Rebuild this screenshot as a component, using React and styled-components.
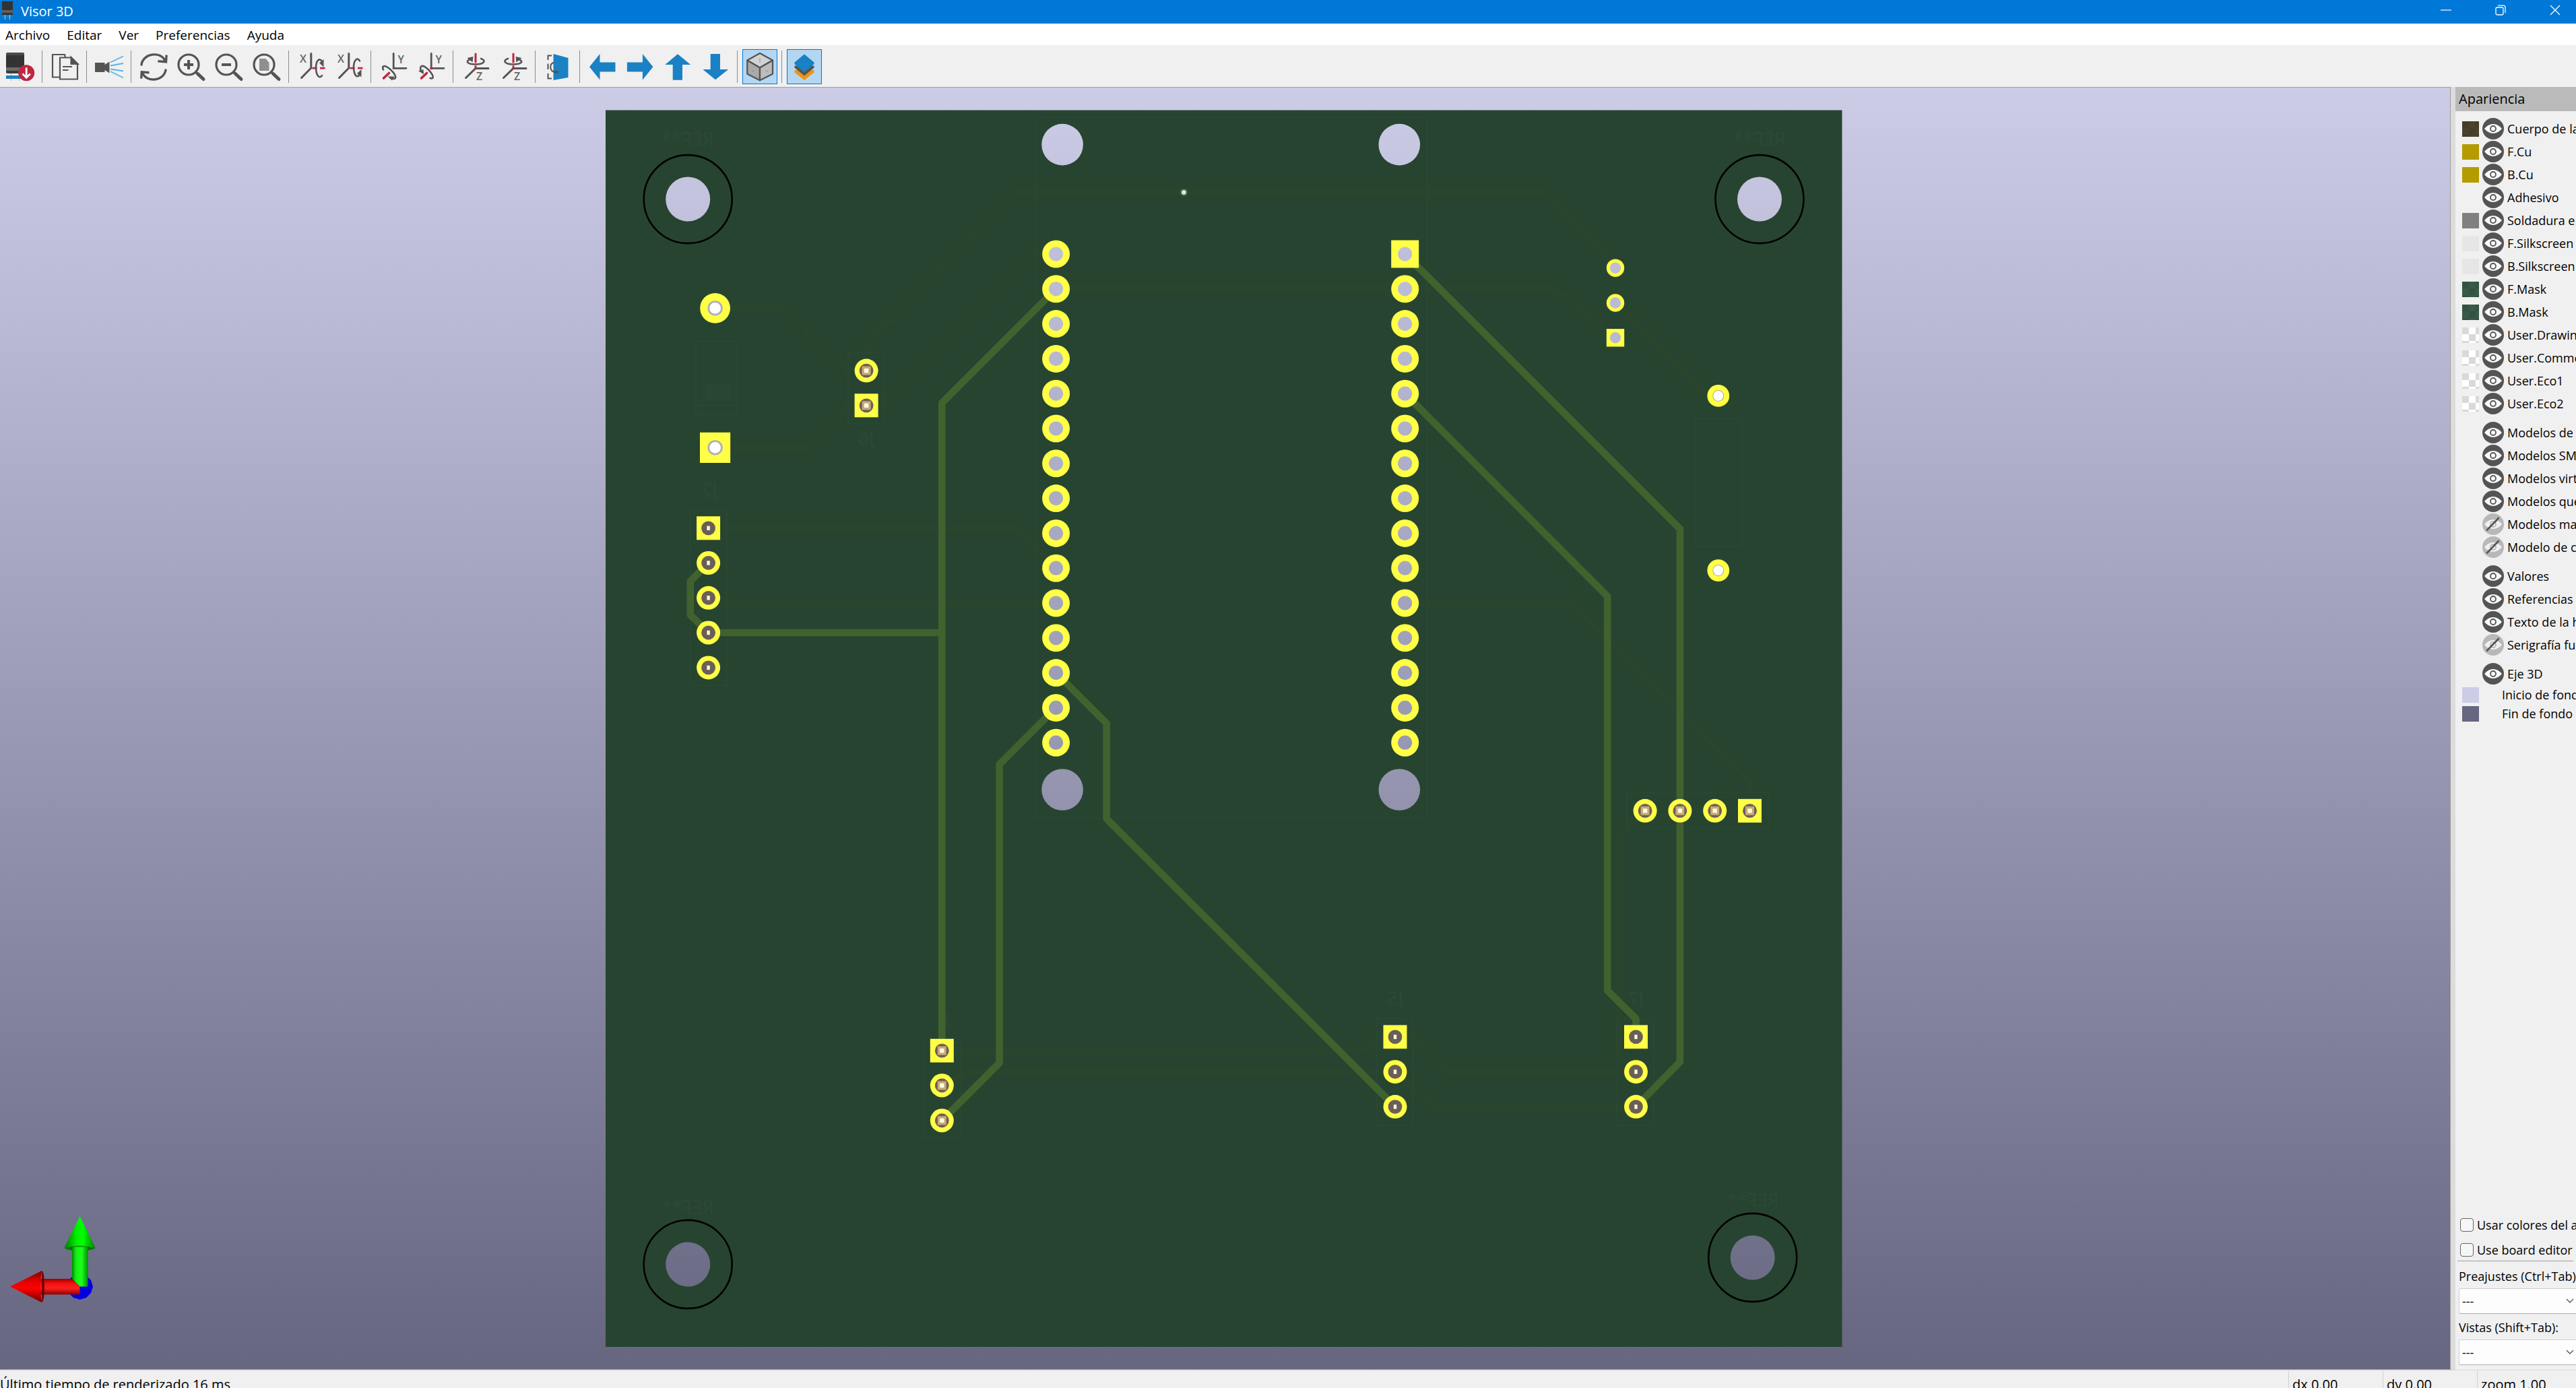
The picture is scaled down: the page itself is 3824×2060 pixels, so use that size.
import React from "react";
import styled, { createGlobalStyle } from "styled-components";

const Global = createGlobalStyle`
  * { box-sizing: border-box; }
  body { margin: 0; overflow: hidden; }
  button, select, input { font: inherit; color: inherit; }
`;

const Window = styled.div`
  display: flex;
  flex-direction: column;
  height: 100vh;
  overflow: hidden;
  background: #f0f0f0;
  color: #000;
  font-family: "Open Sans", "Noto Sans", sans-serif;
  font-size: 18px;
`;

/* Title bar */
const TitleBar = styled.header`
  display: flex;
  align-items: flex-start;
  height: 35px;
  flex: none;
  padding-left: 3px;
  overflow: hidden;
  background: #0078d7;
  color: #fff;
`;
const AppIcon = styled.svg`
  width: 17px;
  height: 30px;
  margin-right: 11px;
`;
const Title = styled.h1`
  flex: 1;
  margin: 0;
  font-size: 20px;
  font-weight: 400;
  line-height: 34px;
`;
const WindowControls = styled.div`
  display: flex;
  flex: none;
  margin-right: -9px;
`;
const WindowButton = styled.button`
  display: flex;
  align-items: center;
  justify-content: center;
  width: 81px;
  height: 29px;
  padding: 0;
  border: 0;
  background: transparent;
`;

/* Menu bar */
const MenuBar = styled.nav`
  display: flex;
  gap: 25px;
  height: 32px;
  flex: none;
  padding-left: 8px;
  background: #fff;
`;
const MenuItem = styled.button`
  padding: 0;
  border: 0;
  background: transparent;
  font-size: 19px;
  line-height: 34px;
`;

/* Toolbar */
const Toolbar = styled.div`
  display: flex;
  align-items: center;
  height: 62px;
  flex: none;
  padding: 2px 0 0 2px;
`;
const ToolButton = styled.button`
  display: flex;
  align-items: center;
  justify-content: center;
  width: 52px;
  height: 52px;
  margin: 0 2px;
  padding: 0;
  border: 1px solid ${(p) => (p.$on ? "#0078d7" : "transparent")};
  background: ${(p) => (p.$on ? "#b3d7f3" : "transparent")};
`;
const ToolSeparator = styled.span`
  width: 1px;
  height: 48px;
  margin: 0 5px 0 4px;
  background: #8c8c8c;
`;
const ToolSvg = styled.svg`
  width: 42px;
  height: 42px;
  overflow: visible;
`;
const AxisLetter = styled.text`
  font-family: "Open Sans", sans-serif;
  font-size: 16px;
  font-weight: 600;
  fill: #666;
`;

/* Main area */
const Main = styled.div`
  display: flex;
  flex: 1;
  min-height: 0;
`;
const Viewport = styled.main`
  position: relative;
  flex: 1;
  min-width: 0;
  border: solid #a0a0a0;
  border-width: 1px 1px 1px 0;
  background: linear-gradient(#cccce6, #666680);
`;
const BoardSvg = styled.svg`
  display: block;
  width: 100%;
  height: 100%;
`;
const AxesSvg = styled.svg`
  position: absolute;
  left: 12px;
  bottom: 92px;
  width: 140px;
  height: 140px;
`;
const SilkText = styled.text`
  font-family: "Open Sans", sans-serif;
  font-size: 28px;
  text-anchor: middle;
  fill: #2c4937;
`;
const Sash = styled.div`
  width: 7px;
  flex: none;
  background: #dcdcdc;
`;

/* Appearance panel */
const Panel = styled.aside`
  display: flex;
  flex-direction: column;
  width: 179px;
  flex: none;
  overflow: hidden;
  white-space: nowrap;
`;
const PanelTitle = styled.h2`
  height: 36px;
  flex: none;
  margin: 0;
  padding-left: 5px;
  background: #bababa;
  font-size: 20px;
  font-weight: 400;
  line-height: 36px;
`;
const Groups = styled.div`
  display: flex;
  flex-direction: column;
  flex: 1;
  gap: 9px;
  padding: 9px 0 0 10px;
`;
const Group = styled.ul`
  margin: 0;
  padding: 0;
  list-style: none;
`;
const LayerRow = styled.li`
  display: flex;
  align-items: center;
  height: ${(p) => (p.$compact ? 28 : 34)}px;
`;
const Swatch = styled.span`
  width: 25px;
  height: 23px;
  flex: none;
  margin-right: ${(p) => (p.$wide ? 34 : 5)}px;
  background: ${(p) => p.$fill};
`;
const EyeButton = styled.button`
  width: 32px;
  height: 32px;
  flex: none;
  margin-right: 5px;
  padding: 0;
  border: 0;
  background: transparent;
`;
const EyeSvg = styled.svg`
  display: block;
  width: 32px;
  height: 32px;
`;
const Options = styled.div`
  display: flex;
  flex-direction: column;
  padding: 0 0 7px 7px;
`;
const CheckLabel = styled.label`
  display: flex;
  align-items: center;
  gap: 5px;
  height: 37px;
`;
const CheckBox = styled.input`
  appearance: none;
  width: 20px;
  height: 20px;
  flex: none;
  margin: 0;
  border: 1px solid #666;
  border-radius: 4px;
  background: #f6f6f6;
`;
const Rule = styled.hr`
  width: 100%;
  height: 1px;
  margin: -2px 0 2px -4px;
  border: 0;
  background: #a0a0a0;
`;
const FieldLabel = styled.label`
  height: 38px;
  margin-left: -2px;
  line-height: 40px;
`;
const SelectBox = styled.div`
  display: flex;
  align-items: center;
  margin: 0 -8px 0 -2px;
`;
const Select = styled.select`
  appearance: none;
  width: 100%;
  height: 38px;
  padding: 0 4px;
  border: 1px solid #d0d0d0;
  border-bottom-color: #b0b0b0;
  border-radius: 3px;
  background: #fdfdfd;
`;
const Chevron = styled.svg`
  width: 12px;
  height: 8px;
  flex: none;
  margin-left: -23px;
  margin-right: 11px;
  pointer-events: none;
`;

/* Status bar */
const StatusBar = styled.footer`
  display: flex;
  height: 27px;
  flex: none;
  padding-top: 1px;
  overflow: hidden;
  border-top: 1px solid #d8d8d8;
  font-size: 20px;
  line-height: 40px;
  white-space: nowrap;
`;
const StatusMessage = styled.span`
  flex: 1;
`;
const StatusField = styled.span`
  width: ${(p) => (p.$last ? 147 : 140)}px;
  flex: none;
  padding-left: 5px;
  border-left: 1px solid #d0d0d0;
`;

const INK = "#545454";
const RED = "#bf2641";
const BLUE = "#1a81c4";

/* Toolbar drawings */
const line = { fill: "none", stroke: INK, strokeWidth: 3, strokeLinecap: "round" };

const Lens = ({ children }) => (
  <ToolSvg viewBox="0 0 42 42">
    <circle cx="17" cy="18" r="15" fill="none" stroke={INK} strokeWidth="3.2" />
    <path d="M27.5 29l3 3" stroke={INK} strokeWidth="3.5" />
    <path d="M30.5 31.5L39 39.5" {...line} strokeWidth="5" />
    {children}
  </ToolSvg>
);

const ICONS = {
  export: (
    <ToolSvg viewBox="0 0 42 42">
      <path d="M2 0h23q2 0 2 3v19H0V3q0-3 2-3z" fill="#333" />
      <path d="M2 0h23q2 1 2 4H0q0-3 2-4z" fill="#4a4a4a" />
      <path d="M0 22h27v5H0z" fill="#6b6b6b" />
      <path d="M0 27h27v2q0 2-2 2H2q-2 0-2-2z" fill="#3b3b3b" />
      <path d="M7.500 31v11M19.500 31v11" stroke="#a9b4bb" strokeWidth="1" />
      <path d="M0 34h22v5H0z" fill={BLUE} />
      <circle cx="30.200" cy="30.300" r="12" fill={RED} />
      <path d="M30.200 22.500v14.500M24.500 31.500l5.700 5.700 5.700-5.700" fill="none" stroke="#fff" strokeWidth="2.800" />
    </ToolSvg>
  ),
  copy: (
    <ToolSvg viewBox="0 0 42 42" fill="none" stroke={INK} strokeWidth="2.200">
      <path d="M22 7.500L21 3H3v33.500h10" />
      <path d="M14 7.500h16.500L40 17v22.500H14z" fill="#f0f0f0" />
      <path d="M30.500 7v10h10z" fill={INK} />
      <path d="M18 21h14M18 26h8.500" />
    </ToolSvg>
  ),
  camera: (
    <ToolSvg viewBox="0 0 42 42">
      <path d="M0 15h14.500v3l7-4.500v17l-7-4.500v3H0z" fill={INK} />
      <path d="M23 14.500L42 5.500M23 19.500l19-3.500M23 24.500l19 3M23 28l19 9.500" stroke="#5ab4e5" strokeWidth="1.800" />
    </ToolSvg>
  ),
  refresh: (
    <ToolSvg viewBox="0 0 42 42" {...line} strokeWidth="3.400" strokeLinejoin="miter">
      <path d="M3 18C5 1.500 31-3 38 12" />
      <path d="M29 13l10.500.8.500-8.500" strokeLinecap="square" />
      <path d="M39 26C36 42.500 11 45 4.500 30.500" />
      <path d="M2.800 37l.5-8.200 9.500.8" strokeLinecap="square" />
    </ToolSvg>
  ),
  zoomIn: (
    <Lens>
      <path d="M10 18h14M17 11v14" stroke={INK} strokeWidth="4" />
    </Lens>
  ),
  zoomOut: (
    <Lens>
      <path d="M10 18h14" stroke={INK} strokeWidth="4" />
    </Lens>
  ),
  zoomFit: (
    <Lens>
      <path d="M10 9h9.500l5 6v12H10z" fill="#8f8f8f" />
    </Lens>
  ),
  rotXcw: (
    <ToolSvg viewBox="0 0 42 42">
      <AxisLetter x="4" y="15">X</AxisLetter>
      <path d="M20.800 1.500V23L6.500 37.500" {...line} />
      <path d="M22.500 23.200h7M34 23.200h7.500" stroke={RED} strokeWidth="2.800" />
      <path d="M37 13C33 7 28 12 28 22.500S33 40 37 34" {...line} strokeWidth="2.600" />
      <path d="M33 15.500L39.500 10v11.500z" fill={INK} />
    </ToolSvg>
  ),
  rotXccw: (
    <ToolSvg viewBox="0 0 42 42">
      <AxisLetter x="4" y="15">X</AxisLetter>
      <path d="M20.800 1.500V23L6.500 37.500" {...line} />
      <path d="M22.500 23.200h7M34 23.200h7.500" stroke={RED} strokeWidth="2.800" />
      <path d="M37 12.500C34 6 28 11 28 21.500S32 38 36 34" {...line} strokeWidth="2.600" />
      <path d="M33 31L39.500 25v11.500z" fill={INK} />
    </ToolSvg>
  ),
  rotYcw: (
    <ToolSvg viewBox="0 0 42 42">
      <AxisLetter x="27.500" y="16">Y</AxisLetter>
      <path d="M21.200 1.500V23.300H40" {...line} strokeWidth="2.800" />
      <path d="M6.500 38L14.500 30.500" {...line} stroke={RED} strokeWidth="3.600" />
      <path d="M6 25.500C3.500 20 7 18.500 12.500 22S25 33 24 37.500C23 40 19.500 39 16.500 37" {...line} strokeWidth="2.600" />
      <path d="M12.500 35.500L22.500 35.500 19 41.500z" fill={INK} />
    </ToolSvg>
  ),
  rotYccw: (
    <ToolSvg viewBox="0 0 42 42">
      <AxisLetter x="27.500" y="16">Y</AxisLetter>
      <path d="M21.200 1.500V23.300H40" {...line} strokeWidth="2.800" />
      <circle cx="21.200" cy="23.300" r="2" fill={RED} />
      <path d="M6.500 38L14.500 30.500" {...line} stroke={RED} strokeWidth="3.600" />
      <path d="M5.500 27C4 19 8 18.500 13 22S25 34 23.500 37.500C22.500 39 21 38.500 19.500 38" {...line} strokeWidth="2.600" />
      <path d="M2 27.500L9.500 25 10 32z" fill={INK} />
    </ToolSvg>
  ),
  rotZcw: (
    <ToolSvg viewBox="0 0 42 42">
      <AxisLetter x="22" y="41">Z</AxisLetter>
      <path d="M40 23.500H21L6.500 37.500" {...line} />
      <path d="M21 2v12M21 20.500v3" stroke={RED} strokeWidth="3" strokeLinecap="round" />
      <path d="M13 10C5 13 9 17.500 21 17.500S38 12 29 9" {...line} strokeWidth="2.600" />
      <path d="M8.500 8l9-2-1 8.500z" fill={INK} />
    </ToolSvg>
  ),
  rotZccw: (
    <ToolSvg viewBox="0 0 42 42">
      <AxisLetter x="22" y="41">Z</AxisLetter>
      <path d="M40 23.500H21L6.500 37.500" {...line} />
      <path d="M21 2v12M21 20.500v3" stroke={RED} strokeWidth="3" strokeLinecap="round" />
      <path d="M13 9C4 12 9 17.500 21 17.500S37 13 29 10" {...line} strokeWidth="2.600" />
      <path d="M33.500 8l-9-2 1 8.500z" fill={INK} />
    </ToolSvg>
  ),
  flip: (
    <ToolSvg viewBox="0 0 42 42">
      <path d="M14.500 2l22 6v29l-22 4z" fill={BLUE} />
      <path d="M12 4.500H6.500V11M6.500 16.500V25M6.500 31v7.500H12" fill="none" stroke={INK} strokeWidth="2" />
      <path d="M14.500 15C8.500 17 8.500 28 17 29" {...line} strokeWidth="2" />
      <path d="M16 26l8.500 2.800L16 31.500z" fill={INK} />
    </ToolSvg>
  ),
  left: (
    <ToolSvg viewBox="0 0 42 42">
      <path d="M2 21.300L17.500 2v12.600h23v14h-23v11.800z" fill={BLUE} />
    </ToolSvg>
  ),
  right: (
    <ToolSvg viewBox="0 0 42 42">
      <path d="M40.400 21.300L24.900 2v12.600H1.900v14h23v11.800z" fill={BLUE} />
    </ToolSvg>
  ),
  up: (
    <ToolSvg viewBox="0 0 42 42">
      <path d="M21 2.300L40.200 18H28v22.700H13.700V18H2.300z" fill={BLUE} />
    </ToolSvg>
  ),
  down: (
    <ToolSvg viewBox="0 0 42 42">
      <path d="M21 40.300L40.200 25H28V2H13.700v23H2.300z" fill={BLUE} />
    </ToolSvg>
  ),
  cube: (
    <ToolSvg viewBox="0 0 42 42" stroke={INK} strokeWidth="2.200" strokeLinejoin="round">
      <path d="M21 1l19 10.500L21 22.500 2.300 11.500z" fill="#d2d2d2" />
      <path d="M2.300 11.500L21 22.500v18.800L2.300 31.800z" fill="#a9a9a9" />
      <path d="M40 11.500L21 22.500v18.800l19-9.500z" fill="#bcbcbc" />
      <path d="M21 8.500v6M8.500 28.500l4-2M33.500 28.500l-4-2" stroke="#8a8a8a" strokeWidth="1" />
    </ToolSvg>
  ),
  layers: (
    <ToolSvg viewBox="0 0 42 42">
      <path d="M6.500 26.500l4-1L21 34l10.500-8.500 4 1v3L21 41 6.500 29.500z" fill="#ee9412" />
      <path d="M6.500 19.500h29v3L21 34.500 6.500 22.500z" fill={INK} />
      <path d="M21 2.500l14.500 12v2.500L21 29.300 6.500 17v-2.500z" fill={BLUE} />
    </ToolSvg>
  ),
};

const TOOLBAR = [
  [["export", "Exportar imagen"]],
  [["copy", "Copiar"]],
  [["camera", "Trazado de rayos"]],
  [["refresh", "Actualizar"], ["zoomIn", "Acercar"], ["zoomOut", "Alejar"], ["zoomFit", "Ajustar"]],
  [["rotXcw", "Rotar X horario"], ["rotXccw", "Rotar X antihorario"]],
  [["rotYcw", "Rotar Y horario"], ["rotYccw", "Rotar Y antihorario"]],
  [["rotZcw", "Rotar Z horario"], ["rotZccw", "Rotar Z antihorario"]],
  [["flip", "Voltear"]],
  [["left", "Izquierda"], ["right", "Derecha"], ["up", "Arriba"], ["down", "Abajo"]],
  [["cube", "Ortogonal", true]],
  [["layers", "Apariencia", true]],
];

/* Board data */
const HEADER_ROWS = Array.from({ length: 15 }, (_, i) => 377 + i * 51.8);

const TRACES = [
  "M1567.600 428.800L1398.300 598V1559",
  "M1051.600 939H1398.300",
  "M1051.600 835.500L1024.800 862.400V912.400L1051.600 939",
  "M1567.600 998.600L1642.600 1073.400V1215L2071 1642.600",
  "M1567.600 1050.300L1483.600 1134.600V1577.600L1398.300 1663",
  "M2085.700 377L2493.900 785V1576L2428.500 1642.600",
  "M2085.700 584.200L2386.200 885V1470L2428.500 1512V1539",
];

const BURIED = [
  "M1567 428.800H2307L2398 501",
  "M1061 457.400H1165L1258 550H1286",
  "M1061 664.400H1195L1258 602H1305L1530 377H1567",
  "M1286 550V512L1512 285H2297L2398 397",
  "M2398 449.500L2536 587H2550",
  "M1051 784H1510L1567 843",
  "M1051 887L1059 895H1567",
  "M2085 895H2333L2598 1160V1203",
  "M1398 1559H2023L2044 1539H2071",
  "M1398 1611L1440 1590H2071",
  "M2071 1539H2100L2152 1591H2428",
  "M2071 1591L2128 1643H2428",
  "M2442 1203L2403 1242V1566L2428 1591",
];

const SILK = [
  "M1033 506h60v110h-60zM1033 601h60",
  "M1259 523h54v106h-54z",
  "M1025 757h54v260h-54z",
  "M1371 1547h56v142h-56z",
  "M2044 1512h54v158h-54z",
  "M2401 1512h54v158h-54z",
  "M2415 1176h210v54h-210z",
  "M2516 622h70v189h-70z",
  "M1538 174h580v1040h-580z",
];

const SILK_LABELS = [
  ["REF**", 1021, 216], ["REF**", 2612, 216], ["REF**", 1021, 1802], ["REF**", 2602, 1791],
  ["J6", 1286, 660], ["J2", 1053, 737], ["J1", 1398, 1522], ["J5", 2071, 1492], ["J7", 2428, 1492],
];

const MOUNTS = [[1021.2, 295.6], [2612, 295.6], [1021.2, 1876.4], [2601.7, 1866.4]];
const DRILLS = [[1577.1, 214.6], [2077.3, 214.6], [1577.1, 1172], [2077.3, 1172]];

const PINS = [
  [1286.1, 550.1, "wide"], [1286.1, 601.8, "wide", true],
  [1051.6, 783.8, "thin", true], [1051.6, 835.5, "thin"], [1051.6, 887.3, "thin"], [1051.6, 939, "thin"], [1051.6, 990.9, "thin"],
  [2442.1, 1203.3, "wide"], [2493.9, 1203.3, "wide"], [2545.7, 1203.3, "wide"], [2597.5, 1203.3, "wide", true],
  [2071, 1538.9, "thin", true], [2071, 1590.7, "thin"], [2071, 1642.6, "thin"],
  [2428.5, 1538.9, "thin", true], [2428.5, 1590.7, "thin"], [2428.5, 1642.6, "thin"],
  [1398.3, 1559.3, "wide", true], [1398.3, 1611, "wide"], [1398.3, 1663, "wide"],
];

const Pad = ({ x, y, r, square, hole, fill = "url(#sky)" }) => (
  <>
    {square ? (
      <rect x={x - r} y={y - r} width={2 * r} height={2 * r} fill="#ffff46" />
    ) : (
      <circle cx={x} cy={y} r={r} fill="#ffff46" />
    )}
    <circle cx={x} cy={y} r={hole} fill={fill} />
  </>
);

const Pin = ({ x, y, kind, square }) => (
  <>
    <Pad x={x} y={y} r={17.5} square={square} hole={10.4} fill="#695f57" />
    {kind === "wide" && <rect x={x - 6.5} y={y - 6.5} width="13" height="13" fill="#c9a877" />}
    {kind === "wide" ? (
      <rect x={x - 3.2} y={y - 3.2} width="6.400" height="6.400" fill="#fffbe2" />
    ) : (
      <rect x={x - 2.2} y={y - 3.2} width="4.400" height="6.400" fill="#fffbe2" />
    )}
  </>
);

const Board = () => (
  <BoardSvg viewBox="0 130 3637 1902">
    <defs>
      <linearGradient id="sky" gradientUnits="userSpaceOnUse" x1="0" y1="130" x2="0" y2="2032">
        <stop offset="0" stopColor="#cccce6" />
        <stop offset="1" stopColor="#666680" />
      </linearGradient>
    </defs>
    <rect x="899" y="163.500" width="1835.500" height="1835.500" fill="#274430" />
    <g fill="none" stroke="#29452d" strokeWidth="11" strokeLinejoin="round">
      {BURIED.map((d) => <path key={d} d={d} />)}
    </g>
    <rect x="1048" y="571" width="37" height="22" fill="#294733" />
    <g fill="none" stroke="#294733" strokeWidth="2">
      {SILK.map((d) => <path key={d} d={d} />)}
    </g>
    {SILK_LABELS.map(([t, x, y]) => (
      <SilkText key={t + x + y} transform={`translate(${x} ${y}) scale(-1 1)`}>{t}</SilkText>
    ))}
    <g fill="none" stroke="#40622f" strokeWidth="10.600" strokeLinejoin="round">
      {TRACES.map((d) => <path key={d} d={d} />)}
    </g>
    {MOUNTS.map(([x, y]) => (
      <g key={x + "-" + y}>
        <circle cx={x} cy={y} r="65.500" fill="none" stroke="#000" strokeWidth="2.600" />
        <circle cx={x} cy={y} r="33" fill="url(#sky)" />
      </g>
    ))}
    {DRILLS.map(([x, y]) => <circle key={x + "-" + y} cx={x} cy={y} r="30.800" fill="url(#sky)" />)}
    {HEADER_ROWS.map((y) => <Pad key={y} x={1567.6} y={y} r={20.5} hole={10.6} />)}
    {HEADER_ROWS.map((y, i) => <Pad key={y} x={2085.7} y={y} r={20.5} hole={10.6} square={i === 0} />)}
    <Pad x={2398} y={397.7} r={13.2} hole={8.2} />
    <Pad x={2398} y={449.5} r={13.2} hole={8.2} />
    <Pad x={2398} y={501.3} r={13.2} hole={8.2} square />
    <Pad x={1061.6} y={457.4} r={22.4} hole={11.2} fill="#b0b0b8" />
    <Pad x={1061.6} y={664.4} r={22.6} hole={11.2} fill="#b0b0b8" square />
    <circle cx="1061.600" cy="457.400" r="8.400" fill="#fff" />
    <circle cx="1061.600" cy="664.400" r="8.400" fill="#fff" />
    <Pad x={2550.8} y={587.4} r={16.4} hole={8.4} fill="#9a9a8a" />
    <Pad x={2550.8} y={846.6} r={16.4} hole={8.4} fill="#9a9a8a" />
    <circle cx="2550.800" cy="587.400" r="7.600" fill="#fff" />
    <circle cx="2550.800" cy="846.600" r="7.600" fill="#fff" />
    {PINS.map(([x, y, kind, square]) => <Pin key={x + "-" + y} x={x} y={y} kind={kind} square={square} />)}
    <circle cx="1757.400" cy="285.500" r="6" fill="#40622f" />
    <circle cx="1757.400" cy="285.500" r="3.400" fill="#dfe3ea" />
  </BoardSvg>
);

const Axes = () => (
  <AxesSvg viewBox="12 1800 140 140">
    <defs>
      <linearGradient id="greenShaft">
        <stop offset="0" stopColor="#008a00" />
        <stop offset=".25" stopColor="#10f010" />
        <stop offset=".6" stopColor="#1cff1c" />
        <stop offset="1" stopColor="#009000" />
      </linearGradient>
      <linearGradient id="greenCone">
        <stop offset="0" stopColor="#007a00" />
        <stop offset=".4" stopColor="#00f000" />
        <stop offset=".6" stopColor="#00ff00" />
        <stop offset="1" stopColor="#008000" />
      </linearGradient>
      <linearGradient id="redShaft" x2="0" y2="1">
        <stop offset="0" stopColor="#a00000" />
        <stop offset=".3" stopColor="#f41010" />
        <stop offset=".6" stopColor="#ff2020" />
        <stop offset="1" stopColor="#900000" />
      </linearGradient>
      <linearGradient id="redCone" x2="0" y2="1">
        <stop offset="0" stopColor="#800000" />
        <stop offset=".35" stopColor="#e80000" />
        <stop offset=".55" stopColor="#ff0000" />
        <stop offset="1" stopColor="#700000" />
      </linearGradient>
    </defs>
    <polygon points="118.500,1890.500 128,1893 135,1900 138,1909.600 135,1919 128,1926 118.500,1928.800 109,1926 102,1919 100,1909.600 102,1900 109,1893" fill="#0000e0" />
    <path d="M107 1850h23.500v59.600h-12L107 1898z" fill="url(#greenShaft)" />
    <path d="M60 1898h47l11.500 11.600v11.600H60z" fill="url(#redShaft)" />
    <path d="M62 1886q4 2 4 23.500T62 1933z" fill="#7a0000" />
    <path d="M15 1909.500L62 1886q-4 23 0 47z" fill="url(#redCone)" />
    <path d="M95.500 1852q23-7 46 0q-4 4-23 4t-23-4z" fill="#007a00" />
    <path d="M107 1850.500h23.500v6H107z" fill="url(#greenShaft)" />
    <path d="M118.500 1805l23 47q-23-6-46 0z" fill="url(#greenCone)" />
  </AxesSvg>
);

const Eye = ({ off }) => (
  <EyeSvg viewBox="0 0 32 32">
    <circle cx="16" cy="16" r="16" fill={off ? "#b8b8b8" : INK} />
    <path d="M3 16Q9 9 16 9t13 7q-6 7-13 7T3 16z" fill={off ? "#f0f0f0" : "#fafafa"} />
    <circle cx="16" cy="16" r="4" fill="none" stroke={off ? "#b8b8b8" : INK} strokeWidth="1.800" />
    {off && <path d="M7 24.500L24 7" stroke={INK} strokeWidth="2.600" strokeLinecap="round" />}
  </EyeSvg>
);

const CHECKER = "repeating-conic-gradient(#fff 0 25%, #d9d9d9 0 50%) 0 0 / 20px 20px";
const BODY = "repeating-conic-gradient(#4a412f 0 25%, #453c2a 0 50%) 0 0 / 20px 20px";
const MASK = "repeating-conic-gradient(#385a49 0 25%, #335241 0 50%) 0 0 / 20px 20px";

const LAYER_GROUPS = [
  [
    { name: "Cuerpo de la", fill: BODY },
    { name: "F.Cu", fill: "#b39b00" },
    { name: "B.Cu", fill: "#b39b00" },
    { name: "Adhesivo" },
    { name: "Soldadura e", fill: "#808080" },
    { name: "F.Silkscreen", fill: "#e6e6e6" },
    { name: "B.Silkscreen", fill: "#e6e6e6" },
    { name: "F.Mask", fill: MASK },
    { name: "B.Mask", fill: MASK },
    { name: "User.Drawin", fill: CHECKER },
    { name: "User.Comme", fill: CHECKER },
    { name: "User.Eco1", fill: CHECKER },
    { name: "User.Eco2", fill: CHECKER },
  ],
  [
    { name: "Modelos de" },
    { name: "Modelos SM" },
    { name: "Modelos virt" },
    { name: "Modelos que" },
    { name: "Modelos ma", off: true },
    { name: "Modelo de c", off: true },
  ],
  [
    { name: "Valores" },
    { name: "Referencias" },
    { name: "Texto de la h" },
    { name: "Serigrafía fu", off: true },
  ],
  [
    { name: "Eje 3D" },
    { name: "Inicio de fond", fill: "#cccce6", compact: true },
    { name: "Fin de fondo", fill: "#666680", compact: true },
  ],
];

const Layer = ({ name, fill = "transparent", off, compact }) => (
  <LayerRow $compact={compact}>
    <Swatch $fill={fill} $wide={compact} />
    {!compact && (
      <EyeButton aria-label={name} aria-pressed={!off}>
        <Eye off={off} />
      </EyeButton>
    )}
    {name}
  </LayerRow>
);

const Preset = ({ id, label }) => (
  <>
    <FieldLabel htmlFor={id}>{label}</FieldLabel>
    <SelectBox>
      <Select id={id}>
        <option>---</option>
      </Select>
      <Chevron viewBox="0 0 12 8">
        <path d="M1 1l5 5 5-5" fill="none" stroke="#555" strokeWidth="1.300" />
      </Chevron>
    </SelectBox>
  </>
);

export default function App() {
  return (
    <Window>
      <Global />
      <TitleBar>
        <AppIcon viewBox="0 0 17 30">
          <path d="M0 2h16v14H0z" fill="#333" />
          <path d="M0 15h16v4H0z" fill="#5f5f5f" />
          <path d="M0 19h16v3H0z" fill="#333" />
          <path d="M0 23h16v3H0z" fill="#1a81c4" />
          <path d="M4.500 22v7M11.500 22v7" stroke="#a8cdea" />
        </AppIcon>
        <Title>Visor 3D</Title>
        <WindowControls>
          <WindowButton aria-label="Minimizar">
            <svg width="16" height="16"><path d="M0 8h16" stroke="#fff" strokeWidth="1.200" /></svg>
          </WindowButton>
          <WindowButton aria-label="Restaurar">
            <svg width="16" height="16" fill="none" stroke="#fff" strokeWidth="1.300">
              <rect x="1" y="4" width="11" height="11" rx="2" />
              <path d="M4 1.200h8q3 0 3 3v8" />
            </svg>
          </WindowButton>
          <WindowButton aria-label="Cerrar">
            <svg width="16" height="16"><path d="M1 1l14 14M15 1L1 15" stroke="#fff" strokeWidth="1.300" /></svg>
          </WindowButton>
        </WindowControls>
      </TitleBar>
      <MenuBar>
        {["Archivo", "Editar", "Ver", "Preferencias", "Ayuda"].map((m) => <MenuItem key={m}>{m}</MenuItem>)}
      </MenuBar>
      <Toolbar role="toolbar">
        {TOOLBAR.map((group, i) => (
          <React.Fragment key={i}>
            {i > 0 && <ToolSeparator />}
            {group.map(([icon, label, on]) => (
              <ToolButton key={icon} aria-label={label} $on={on}>{ICONS[icon]}</ToolButton>
            ))}
          </React.Fragment>
        ))}
      </Toolbar>
      <Main>
        <Viewport>
          <Board />
          <Axes />
        </Viewport>
        <Sash />
        <Panel>
          <PanelTitle>Apariencia</PanelTitle>
          <Groups>
            {LAYER_GROUPS.map((group, i) => (
              <Group key={i}>
                {group.map((layer) => <Layer key={layer.name} {...layer} />)}
              </Group>
            ))}
          </Groups>
          <Options>
            <CheckLabel><CheckBox type="checkbox" />Usar colores del a</CheckLabel>
            <CheckLabel><CheckBox type="checkbox" />Use board editor</CheckLabel>
            <Rule />
            <Preset id="presets" label="Preajustes (Ctrl+Tab):" />
            <Preset id="views" label="Vistas (Shift+Tab):" />
          </Options>
        </Panel>
      </Main>
      <StatusBar>
        <StatusMessage>Último tiempo de renderizado 16 ms</StatusMessage>
        <StatusField>dx 0.00</StatusField>
        <StatusField>dy 0.00</StatusField>
        <StatusField $last>zoom 1.00</StatusField>
      </StatusBar>
    </Window>
  );
}
